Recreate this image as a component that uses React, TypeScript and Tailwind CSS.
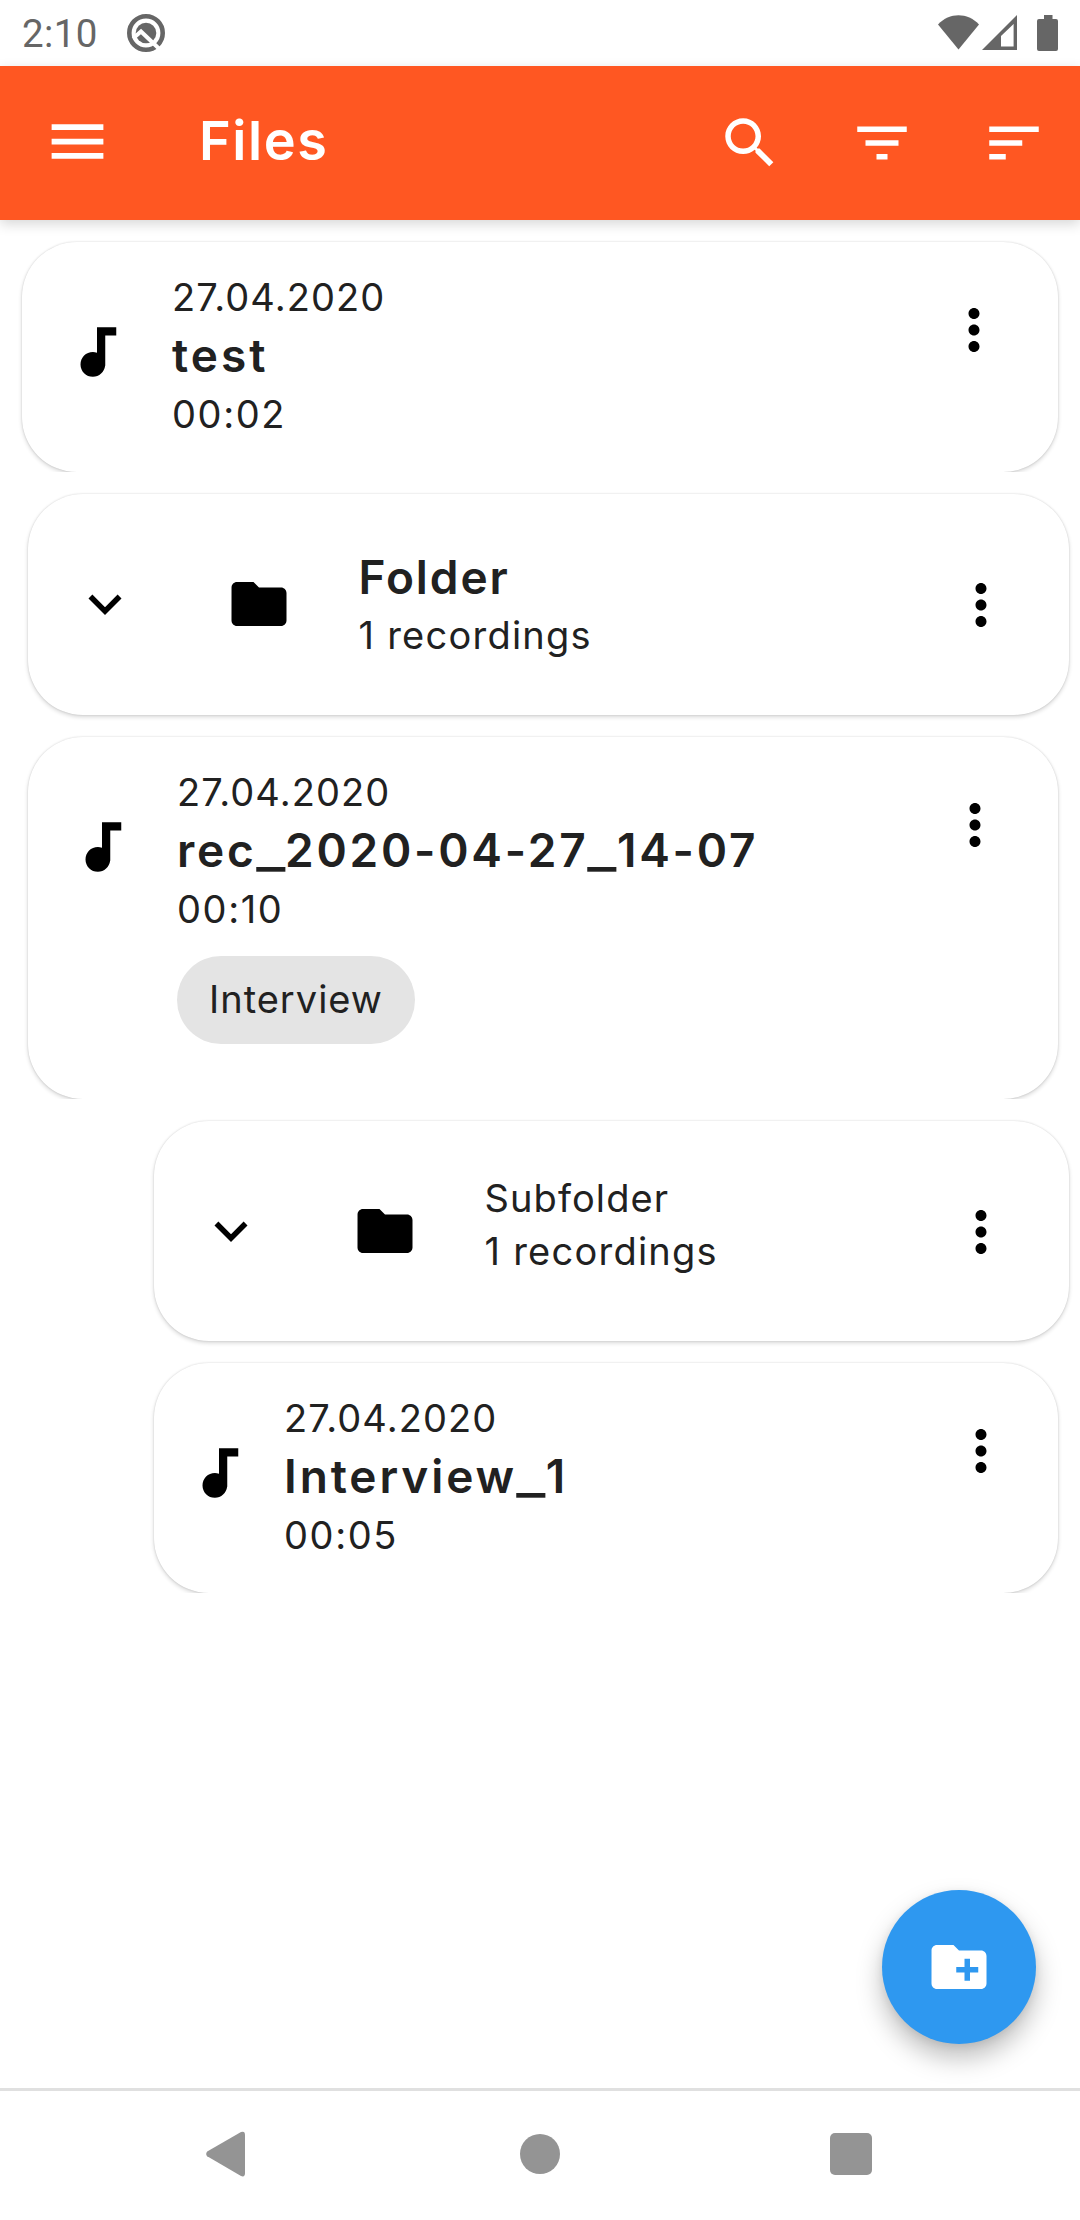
import { Fragment } from "react";

type IconProps = { d: string; className?: string };

function Icon({ d, className = "" }: IconProps) {
  return (
    <svg viewBox="0 0 24 24" fill="currentColor" className={`size-[66px] shrink-0 ${className}`}>
      <path d={d} />
    </svg>
  );
}

const MENU = "M3 18h18v-2H3v2zm0-5h18v-2H3v2zm0-7v2h18V6H3z";
const SEARCH =
  "M15.5 14h-.79l-.28-.27C15.41 12.59 16 11.11 16 9.5 16 5.91 13.09 3 9.5 3S3 5.91 3 9.5 5.91 16 9.5 16c1.61 0 3.09-.59 4.23-1.57l.27.28v.79l5 4.99L20.49 19l-4.99-5zm-6 0C7.01 14 5 11.99 5 9.5S7.01 5 9.5 5 14 7.01 14 9.5 11.99 14 9.5 14z";
const FILTER = "M10 18h4v-2h-4v2zM3 6v2h18V6H3zm3 7h12v-2H6v2z";
const SORT = "M3 18h6v-2H3v2zM3 6v2h18V6H3zm0 7h12v-2H3v2z";
const NOTE =
  "M12 3v9.28c-.47-.17-.97-.28-1.5-.28C8.01 12 6 14.01 6 16.5S8.01 21 10.5 21c2.31 0 4.2-1.75 4.45-4H15V6h4V3h-7z";
const MORE =
  "M12 8c1.1 0 2-.9 2-2s-.9-2-2-2-2 .9-2 2 .9 2 2 2zm0 2c-1.1 0-2 .9-2 2s.9 2 2 2 2-.9 2-2-.9-2-2-2zm0 6c-1.1 0-2 .9-2 2s.9 2 2 2 2-.9 2-2-.9-2-2-2z";
const CHEVRON = "M16.59 8.59L12 13.17 7.41 8.59 6 10l6 6 6-6z";
const FOLDER = "M10 4H4c-1.1 0-1.99.9-1.99 2L2 18c0 1.1.9 2 2 2h16c1.1 0 2-.9 2-2V8c0-1.1-.9-2-2-2h-8l-2-2z";
const NEW_FOLDER =
  "M20 6h-8l-2-2H4c-1.11 0-1.99.89-1.99 2L2 18c0 1.11.89 2 2 2h16c1.11 0 2-.89 2-2V8c0-1.11-.89-2-2-2zm-1 8h-3v3h-2v-3h-3v-2h3V9h2v3h3v2z";

function StatusBar() {
  return (
    <div className="flex h-[66px] shrink-0 items-center px-[22px] text-[#666666]">
      <span className="mt-[2px] w-[105px] font-[Roboto,sans-serif] text-[38.5px] leading-[46px] tracking-[0.4px]">
        2:10
      </span>
      <svg viewBox="0 0 38 38" className="size-[38px]">
        <circle cx="19" cy="19" r="16.7" fill="none" stroke="currentColor" strokeWidth="4.6" />
        <circle cx="19" cy="19" r="10.3" fill="currentColor" />
        <path d="M6 24.500L14 17.500L35 37.500" fill="none" stroke="#fff" strokeWidth="4" />
      </svg>
      <svg viewBox="0 0 120 36" className="ml-auto h-[36px] w-[120px]" fill="currentColor">
        <path d="M0 9.500C11.500 -2.700 29.500 -2.700 41 9.500L20.500 34.500Z" />
        <path fillRule="evenodd" d="M44 35L79 0V35ZM63 31.500H75.600V9L63 21Z" />
        <path d="M106 0H114.500V4H118Q120 4 120 6V34Q120 36 118 36H101Q99 36 99 34V6Q99 4 101 4H106Z" />
      </svg>
    </div>
  );
}

function Header() {
  return (
    <header className="z-10 flex h-[154px] shrink-0 items-center bg-[#ff5722] pr-[33px] pb-px pl-[43px] text-white shadow-[0_4px_12px_rgba(0,0,0,0.16)]">
      <svg viewBox="0 0 24 24" fill="currentColor" className="-mt-[2px] size-[69px]">
        <path d={MENU} />
      </svg>
      <h1 className="-mt-[3px] ml-[87px] text-[54px] leading-[64px] font-semibold tracking-[1.6px]">Files</h1>
      <div className="ml-auto flex gap-[66px]">
        <Icon d={SEARCH} />
        <Icon d={FILTER} />
        <Icon d={SORT} />
      </div>
    </header>
  );
}

/* Underscores are set wider than the face draws them. */
function Name({ text }: { text: string }) {
  return text.split("_").map((part, i) => (
    <Fragment key={i}>
      {i > 0 && <span className="mr-[4px] ml-[3px] inline-block scale-x-[1.35] tracking-normal">_</span>}
      {part}
    </Fragment>
  ));
}

const CARD =
  "flex items-start rounded-[55px] bg-white shadow-[0_0_2px_rgba(0,0,0,0.14),0_2px_4px_rgba(0,0,0,0.16)]";

type RecordingProps = {
  date: string;
  name: string;
  duration: string;
  tag?: string;
  wrap: string;
  card: string;
  text: string;
  title: string;
  more: string;
};

/* The wrapper clips the card's bottom shadow, leaving only its corners visible. */
function Recording({ date, name, duration, tag, wrap, card, text, title, more }: RecordingProps) {
  return (
    <div className={`overflow-hidden pr-[22px] ${wrap}`}>
      <div className={`${CARD} ${card}`}>
        <Icon d={NOTE} className="mt-[77px]" />
        <div className={`flex flex-1 flex-col items-start pt-[29px] text-[38px] text-[#212121] ${text}`}>
          <div className="leading-[52px] tracking-[1.1px]">{date}</div>
          <div className={`text-[46px] leading-[64px] font-semibold ${title}`}>
            <Name text={name} />
          </div>
          <div className="leading-[55px] tracking-[1.6px]">{duration}</div>
          {tag && (
            <div className="mt-[19px] flex h-[88px] items-center rounded-full bg-[#e4e4e4] px-[32px] pb-[2px] tracking-[1px]">
              {tag}
            </div>
          )}
        </div>
        <Icon d={MORE} className={`mt-[55px] ${more}`} />
      </div>
    </div>
  );
}

type FolderProps = { name: string; count: string; wrap: string; card: string; title: string };

function Folder({ name, count, wrap, card, title }: FolderProps) {
  return (
    <div className={`pr-[11px] ${wrap}`}>
      <div className={`${CARD} pr-[55px] pl-[44px] ${card}`}>
        <Icon d={CHEVRON} className="mt-[77px]" />
        <Icon d={FOLDER} className="mt-[77px] ml-[88px]" />
        <div className="flex-1 pt-[51px] pl-[66.5px] text-[38px] text-[#212121]">
          <div className={title}>{name}</div>
          <div className="leading-[53px] tracking-[1.25px]">{count}</div>
        </div>
        <Icon d={MORE} className="mt-[77.5px]" />
      </div>
    </div>
  );
}

export default function App() {
  return (
    <div className="relative flex h-[2220px] w-[1080px] flex-col overflow-hidden bg-white font-[Inter,sans-serif] text-black">
      <StatusBar />
      <Header />
      <main className="flex flex-1 flex-col">
        <Recording
          date="27.04.2020"
          name="test"
          duration="00:02"
          wrap="pt-[22px] pl-[22px]"
          card="h-[230px] pl-[42px]"
          text="pl-[42px]"
          title="tracking-[3px]"
          more="mr-[51px]"
        />
        <Folder
          name="Folder"
          count="1 recordings"
          wrap="pt-[22px] pl-[28px]"
          card="h-[221px]"
          title="text-[46px] leading-[64px] font-semibold tracking-[1.9px]"
        />
        <Recording
          date="27.04.2020"
          name="rec_2020-04-27_14-07"
          duration="00:10"
          tag="Interview"
          wrap="pt-[22px] pl-[28px]"
          card="h-[362px] pl-[41px]"
          text="pl-[42px]"
          title="tracking-[2.75px]"
          more="mr-[50px]"
        />
        <Folder
          name="Subfolder"
          count="1 recordings"
          wrap="pt-[22px] pl-[154px]"
          card="h-[220px]"
          title="leading-[53px] tracking-[1.1px]"
        />
        <Recording
          date="27.04.2020"
          name="Interview_1"
          duration="00:05"
          wrap="pt-[22px] pl-[154px]"
          card="h-[230px] pl-[32px]"
          text="pl-[32px]"
          title="tracking-[2.9px]"
          more="mr-[44px]"
        />
      </main>
      <button
        aria-label="New folder"
        className="absolute right-[44px] bottom-[176px] flex size-[154px] items-center justify-center rounded-full bg-[#2e98f0] text-white shadow-[0_14px_26px_rgba(0,0,0,0.26),0_2px_8px_rgba(0,0,0,0.08)]"
      >
        <Icon d={NEW_FOLDER} />
      </button>
      <nav className="flex h-[132px] shrink-0 items-center justify-between border-t-[3px] border-[#e0e0e0] pr-[208px] pb-[3px] pl-[206px] text-[#949494]">
        <svg viewBox="0 0 40 46" className="h-[46px] w-[40px]" fill="currentColor">
          <path d="M1.200 20.500Q-.8 23 1.200 25.200L35 45Q39 46.500 39 42V4Q39 -.5 35 1Z" />
        </svg>
        <div className="ml-[4px] size-[40px] rounded-full bg-current" />
        <div className="size-[42px] rounded-[5px] bg-current" />
      </nav>
    </div>
  );
}
